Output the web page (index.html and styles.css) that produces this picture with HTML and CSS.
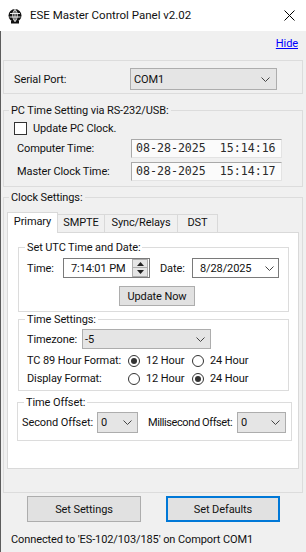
FILE: index.html
```html
<!DOCTYPE html>
<html>
<head>
<meta charset="utf-8">
<title>ESE Master Control Panel v2.02</title>
<link rel="stylesheet" href="styles.css">
</head>
<body>
<div class="window">
  <div class="titlebar">
    <svg class="app-icon" width="16" height="16" viewBox="0 0 16 16">
      <circle cx="8" cy="7.5" r="6.5" fill="#111"/>
      <rect x="4" y="13" width="8" height="2.5" fill="#111"/>
      <path d="M3 5.5h10M2.5 9h11M8 1.5v12" stroke="#fff" stroke-width="0.9" fill="none"/>
      <path d="M8 1.5c-3 2-3 9 0 12M8 1.5c3 2 3 9 0 12" stroke="#fff" stroke-width="0.9" fill="none"/>
    </svg>
    <span class="title">ESE Master Control Panel v2.02</span>
    <svg class="close" width="11" height="11" viewBox="0 0 11 11">
      <path d="M0.5 0.5L10.5 10.5M10.5 0.5L0.5 10.5" stroke="#000" stroke-width="1" fill="none"/>
    </svg>
  </div>

  <div class="client">
    <div class="hide-row"><a class="link">Hide</a></div>

    <div class="box serial">
      <span class="lbl w-serial">Serial Port:</span>
      <div class="combo combo-com">
        <span>COM1</span>
        <svg class="chev" width="9" height="5" viewBox="0 0 9 5"><path d="M0.5 0.5L4.5 4.5L8.5 0.5" fill="none" stroke="#444"/></svg>
      </div>
    </div>

    <fieldset class="group pc">
      <legend class="legend-outer">PC Time Setting via RS-232/USB:</legend>
      <div class="row check-row"><span class="checkbox"></span><span>Update PC Clock.</span></div>
      <div class="row time-row r-first"><span class="lbl w-timelbl">Computer Time:</span><div class="timebox">08-28-2025  15:14:16</div></div>
      <div class="row time-row r-second"><span class="lbl w-timelbl">Master Clock Time:</span><div class="timebox">08-28-2025  15:14:17</div></div>
    </fieldset>

    <fieldset class="group clock">
      <legend class="legend-outer">Clock Settings:</legend>
      <div class="tabs">
        <div class="tabstrip">
          <div class="tab sel t-primary">Primary</div>
          <div class="tab t-smpte">SMPTE</div>
          <div class="tab t-sync">Sync/Relays</div>
          <div class="tab t-dst">DST</div>
        </div>
        <div class="tabpage">
          <fieldset class="group utc">
            <legend class="legend-inner">Set UTC Time and Date:</legend>
            <div class="row utc-row">
              <span class="lbl w-tlbl">Time:</span>
              <div class="picker">
                <span>7:14:01 PM</span>
                <div class="spinner">
                  <div class="spin-btn"><svg width="7" height="4" viewBox="0 0 7 4"><path d="M0 4L3.5 0L7 4z" fill="#222"/></svg></div>
                  <div class="spin-btn"><svg width="7" height="4" viewBox="0 0 7 4"><path d="M0 0L3.5 4L7 0z" fill="#222"/></svg></div>
                </div>
              </div>
              <span class="lbl w-dlbl">Date:</span>
              <div class="picker date">
                <span>8/28/2025</span>
                <svg class="chev" width="9" height="5" viewBox="0 0 9 5"><path d="M0.5 0.5L4.5 4.5L8.5 0.5" fill="none" stroke="#444"/></svg>
              </div>
            </div>
            <div class="row update-row"><button class="btn btn-update">Update Now</button></div>
          </fieldset>

          <fieldset class="group tset">
            <legend class="legend-inner">Time Settings:</legend>
            <div class="row tz-row">
              <span class="lbl w-tz">Timezone:</span>
              <div class="combo combo-tz">
                <span>-5</span>
                <svg class="chev" width="9" height="5" viewBox="0 0 9 5"><path d="M0.5 0.5L4.5 4.5L8.5 0.5" fill="none" stroke="#444"/></svg>
              </div>
            </div>
            <div class="row radio-row rr-first">
              <span class="lbl w-radiolbl">TC 89 Hour Format:</span>
              <span class="opt"><span class="radio on"></span>12 Hour</span>
              <span class="opt"><span class="radio"></span>24 Hour</span>
            </div>
            <div class="row radio-row rr-second">
              <span class="lbl w-radiolbl">Display Format:</span>
              <span class="opt"><span class="radio"></span>12 Hour</span>
              <span class="opt"><span class="radio on"></span>24 Hour</span>
            </div>
          </fieldset>

          <fieldset class="group toff">
            <legend class="legend-inner">Time Offset:</legend>
            <div class="row off-row">
              <span class="lbl w-sec">Second Offset:</span>
              <div class="combo combo-sec">
                <span>0</span>
                <svg class="chev" width="9" height="5" viewBox="0 0 9 5"><path d="M0.5 0.5L4.5 4.5L8.5 0.5" fill="none" stroke="#444"/></svg>
              </div>
              <span class="lbl w-ms">Millisecond Offset:</span>
              <div class="combo combo-ms">
                <span>0</span>
                <svg class="chev" width="9" height="5" viewBox="0 0 9 5"><path d="M0.5 0.5L4.5 4.5L8.5 0.5" fill="none" stroke="#444"/></svg>
              </div>
            </div>
          </fieldset>
        </div>
      </div>
    </fieldset>

    <div class="buttons">
      <button class="btn btn-main">Set Settings</button>
      <button class="btn btn-main default">Set Defaults</button>
    </div>
    <div class="status">Connected to 'ES-102/103/185' on Comport COM1</div>
  </div>
</div>
</body>
</html>
```

FILE: styles.css
```css
* { box-sizing: border-box; }
html, body { margin: 0; padding: 0; }
body {
  width: 306px;
  height: 552px;
  overflow: hidden;
  font-family: Roboto, "Segoe UI", "Liberation Sans", sans-serif;
  font-size: 11px;
  line-height: 15px;
  letter-spacing: -0.1px;
  color: #111;
  background: #f0f0f0;
}
.window { width: 306px; height: 552px; display: flex; flex-direction: column; }

.titlebar { height: 31px; flex: none; background: #fff; display: flex; align-items: center; }
.app-icon { margin-left: 7px; flex: none; }
.title { margin-left: 7px; flex: 1; font-size: 11.5px; letter-spacing: 0; }
.close { margin-right: 11px; flex: none; }

.client {
  flex: 1;
  background: #f0f0f0;
  box-shadow: inset 1px 0 0 #5c5c5c;
  display: flex;
  flex-direction: column;
}

.hide-row { height: 29px; flex: none; display: flex; justify-content: flex-end; padding: 5px 8px 0 0; }
.link { color: #0000ff; text-decoration: underline; cursor: pointer; }

.row { display: flex; align-items: center; }
.lbl { white-space: nowrap; flex: none; }

.box { margin: 0 3px; border: 1px solid #dcdcdc; }
.serial { height: 34px; flex: none; padding: 7px 0 3px 10px; display: flex; align-items: center; }
.w-serial { width: 116px; }

.combo {
  flex: none;
  display: flex;
  align-items: center;
  justify-content: space-between;
  border: 1px solid #adadad;
  background: #e5e5e5;
  padding: 0 5px 0 3px;
}
.chev { flex: none; }
.combo-com { width: 147px; height: 22px; padding: 0 6px 0 3px; }
.combo-tz { width: 129px; height: 20px; padding: 0 5px 0 2px; }
.combo-sec { width: 41px; height: 21px; }
.combo-ms { width: 49px; height: 21px; }

.group { margin: 0 3px; border: 1px solid #dcdcdc; padding: 0; min-width: 0; flex: none; }
legend { padding: 0 2px; line-height: 15px; height: 15px; white-space: nowrap; }
.legend-outer { margin-left: 5px; }
.legend-inner { margin-left: 6px; }

.pc { margin-top: 9px; padding-bottom: 5px; }
.check-row { margin-top: 3px; height: 15px; padding-left: 10px; }
.checkbox { width: 13px; height: 13px; border: 1px solid #333; background: #fff; margin-right: 6px; flex: none; }
.time-row { height: 19px; padding-left: 13px; }
.r-first { margin-top: 3px; }
.r-second { margin-top: 4px; }
.w-timelbl { width: 114px; }
.timebox {
  width: 151px;
  height: 19px;
  border: 1px solid;
  border-color: #a9a9a9 #e3e3e3 #e3e3e3 #a9a9a9;
  background: #fbfbfb;
  font-family: "DejaVu Sans Mono", "Liberation Mono", monospace;
  font-size: 11.6px;
  letter-spacing: 0;
  line-height: 17px;
  padding-left: 4px;
  white-space: pre;
  color: #2a2a2a;
  flex: none;
}

.clock { margin-top: 3px; padding-bottom: 23px; }
.tabs { margin: 7px 3px 0; }
.tabstrip { display: flex; align-items: flex-end; height: 20px; }
.tab {
  height: 18px;
  border: 1px solid #d9d9d9;
  border-bottom: none;
  background: #f0f0f0;
  text-align: center;
  line-height: 16px;
  margin-left: -1px;
  white-space: nowrap;
}
.tab.sel {
  height: 21px;
  margin-left: 0;
  margin-bottom: -1px;
  background: #fff;
  line-height: 18px;
  position: relative;
  z-index: 1;
}
.t-primary { width: 51px; }
.t-smpte { width: 48px; }
.t-sync { width: 74px; }
.t-dst { width: 41px; }

.tabpage { height: 237px; border: 1px solid #d9d9d9; background: #fff; display: flex; flex-direction: column; }

.utc { margin: 7px 9px 0 10px; padding-bottom: 5px; }
.utc-row { margin-top: 3px; height: 20px; padding-left: 8px; }
.w-tlbl { width: 36px; }
.w-dlbl { width: 32px; margin-left: 10px; }
.picker {
  width: 87px;
  height: 20px;
  flex: none;
  border: 1px solid #7a7a7a;
  background: #fff;
  display: flex;
  align-items: center;
  justify-content: space-between;
  padding-left: 7px;
}
.picker.date { padding-right: 4px; }
.spinner { display: flex; flex-direction: column; margin-right: 1px; height: 18px; }
.spin-btn {
  width: 16px;
  height: 9px;
  border: 1px solid #adadad;
  background: #e5e5e5;
  display: flex;
  align-items: center;
  justify-content: center;
}
.spin-btn + .spin-btn { border-top: none; }
.update-row { margin-top: 8px; height: 20px; padding-left: 100px; }

.btn {
  font: inherit;
  letter-spacing: inherit;
  color: #111;
  border: 1px solid #adadad;
  background: #e1e1e1;
  padding: 0;
  margin: 0;
  flex: none;
}
.btn-update { width: 76px; height: 20px; }

.tset { margin: 0 9px 0 10px; padding-bottom: 4px; }
.tz-row { margin-top: 2px; height: 20px; padding-left: 8px; }
.w-tz { width: 55px; }
.radio-row { height: 15px; padding-left: 8px; }
.rr-first { margin-top: 4px; }
.rr-second { margin-top: 3px; }
.w-radiolbl { width: 101px; }
.opt { width: 64px; display: flex; align-items: center; white-space: nowrap; flex: none; }
.radio {
  width: 12px;
  height: 12px;
  border-radius: 50%;
  border: 1px solid #333;
  background: #fff;
  margin-right: 6px;
  display: flex;
  align-items: center;
  justify-content: center;
  flex: none;
}
.radio.on::after { content: ""; width: 6px; height: 6px; border-radius: 50%; background: #333; }

.toff { margin: 4px 6px 0 9px; padding-bottom: 7px; }
.off-row { margin-top: 2px; height: 21px; padding-left: 4px; }
.w-sec { width: 75px; }
.w-ms { width: 89px; margin-left: 10px; letter-spacing: -0.4px; }

.buttons { display: flex; gap: 25px; margin-top: 3px; padding-left: 27px; flex: none; }
.btn-main { width: 114px; height: 26px; }
.btn-main.default { border: 2px solid #0078d7; }

.status { margin-top: 10px; padding-left: 11px; white-space: nowrap; }
```
